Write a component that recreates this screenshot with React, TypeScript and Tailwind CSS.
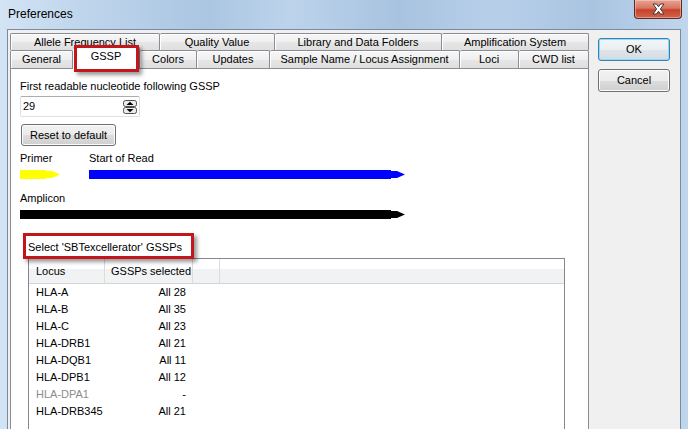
import React from "react";

const tabRow1 = [
  { label: "Allele Frequency List", cls: "w-[150px] border-l" },
  { label: "Quality Value", cls: "w-[115px]" },
  { label: "Library and Data Folders", cls: "w-[167px]" },
  { label: "Amplification System", cls: "w-[147px]" },
];

const tabRow2 = [
  { label: "General", cls: "w-[63px] border-l", selected: false },
  { label: "GSSP", cls: "w-[67px]", selected: true },
  { label: "Colors", cls: "w-[57px]", selected: false },
  { label: "Updates", cls: "w-[73px]", selected: false },
  { label: "Sample Name / Locus Assignment", cls: "w-[190px]", selected: false },
  { label: "Loci", cls: "w-[59px]", selected: false },
  { label: "CWD list", cls: "w-[70px]", selected: false },
];

const rows: { locus: string; sel: string; disabled?: boolean }[] = [
  { locus: "HLA-A", sel: "All 28" },
  { locus: "HLA-B", sel: "All 35" },
  { locus: "HLA-C", sel: "All 23" },
  { locus: "HLA-DRB1", sel: "All 21" },
  { locus: "HLA-DQB1", sel: "All 11" },
  { locus: "HLA-DPB1", sel: "All 12" },
  { locus: "HLA-DPA1", sel: "-", disabled: true },
  { locus: "HLA-DRB345", sel: "All 21" },
];

function Arrow({ w, color }: { w: number; color: string }) {
  const b = w - 14;
  const s = w - 8;
  return (
    <svg width={w} height={10} viewBox={`0 0 ${w} 10`} className="block">
      <path d={`M0 0H${b}V1H${s}L${w} 4.5L${s} 8H${b}V9H0Z`} fill={color} />
    </svg>
  );
}

const tabBase =
  "flex justify-center border-t border-r border-[#898c95] rounded-t-[2px] leading-[13px] whitespace-nowrap overflow-hidden";
const tabInactive =
  "bg-[linear-gradient(to_bottom,#f7f7f7_0%,#efefef_50%,#e6e6e6_51%,#dfdfdf_100%)] shadow-[inset_1px_1px_0_#ffffff]";

export default function App() {
  return (
    <div className="relative w-[688px] h-[429px] overflow-hidden font-['Liberation_Sans',Arial,sans-serif] text-[11px] text-black bg-[linear-gradient(to_right,#d3e4f5_0%,#bfd5ec_12%,#abc6e2_30%,#bcd3eb_42%,#a8c3e0_58%,#b8cfe9_72%,#a9c4e1_86%,#c0d6ed_100%)]">
      {/* Title bar */}
      <div className="h-[29px] flex items-start justify-between">
        <div className="pl-[8px] pt-[7px] text-[12px] leading-[15px] text-black">Preferences</div>
        <div className="mr-[6px] w-[48px] h-[19px] rounded-b-[4px] border border-t-0 border-[#5b2b26] bg-[linear-gradient(to_bottom,#e7a493_0%,#d8765f_45%,#c6412b_55%,#d3644b_100%)] shadow-[inset_0_0_0_1px_rgba(255,220,210,0.45)] flex items-center justify-center">
          <svg width="15" height="12" viewBox="0 0 15 12">
            <path
              d="M2 1H5.5L7.5 3.8L9.5 1H13L9.4 6L13 11H9.5L7.5 8.2L5.5 11H2L5.6 6Z"
              fill="#ffffff"
              stroke="#3a3a3a"
              strokeWidth="1"
              strokeLinejoin="round"
            />
          </svg>
        </div>
      </div>

      {/* Client area */}
      <div className="mx-[7px] h-[400px] border-l border-t border-r border-[#7c8a9b] bg-[#f0f0f0] flex gap-[9px] pl-[2px] pt-[3px]">
        {/* Tab control */}
        <div className="w-[579px] flex flex-col">
          <div className="flex h-[17px] shrink-0">
            {tabRow1.map((t) => (
              <div key={t.label} className={`${tabBase} ${tabInactive} ${t.cls} items-start pt-[2px]`}>
                {t.label}
              </div>
            ))}
          </div>
          <div className="flex h-[18px] items-end shrink-0">
            {tabRow2.map((t) =>
              t.selected ? (
                <div
                  key={t.label}
                  className={`${tabBase} ${t.cls} relative top-[1px] z-10 h-[22px] bg-white items-start pt-[2px]`}
                >
                  {t.label}
                </div>
              ) : (
                <div key={t.label} className={`${tabBase} ${tabInactive} ${t.cls} h-[18px] items-start pt-[2px]`}>
                  {t.label}
                </div>
              )
            )}
          </div>

          {/* Panel */}
          <div className="flex-1 min-h-0 bg-white border border-b-0 border-[#898c95] flex flex-col pl-[9px] overflow-hidden">
            <div className="shrink-0 mt-[11px] h-[13px] leading-[13px]">First readable nucleotide following GSSP</div>
            <div className="shrink-0 mt-[3px] w-[120px] h-[21px] border border-[#dbdfe6] border-t-[#abadb3] rounded-[2px] flex items-center justify-between pl-[2px] pr-[2px]">
              <span className="leading-[13px]">29</span>
              <svg width="14" height="14" viewBox="0 0 14 14" className="block">
                <rect x="0.5" y="0.5" width="13" height="6" rx="2" fill="#ececec" stroke="#4f4f4f" />
                <rect x="0.5" y="7.5" width="13" height="6" rx="2" fill="#ececec" stroke="#4f4f4f" />
                <path d="M3.5 5L7 1.8L10.5 5Z" fill="#000" />
                <path d="M3.5 9L7 12.2L10.5 9Z" fill="#000" />
              </svg>
            </div>
            <div className="shrink-0 mt-[7px] ml-[1px] w-[95px] h-[22px] rounded-[3px] border border-[#707070] shadow-[inset_0_0_0_1px_#fcfcfc] bg-[linear-gradient(to_bottom,#f2f2f2_0%,#ebebeb_50%,#dddddd_51%,#cfcfcf_100%)] flex items-center justify-center leading-[13px]">
              Reset to default
            </div>
            <div className="shrink-0 mt-[6px] h-[13px] leading-[13px] flex">
              <span className="w-[69px]">Primer</span>
              <span>Start of Read</span>
            </div>
            <div className="shrink-0 mt-[5px] flex">
              <div className="w-[69px]">
                <Arrow w={40} color="#ffff00" />
              </div>
              <Arrow w={316} color="#0000ff" />
            </div>
            <div className="shrink-0 mt-[12px] h-[13px] leading-[13px]">Amplicon</div>
            <div className="shrink-0 mt-[5px]">
              <Arrow w={385} color="#000000" />
            </div>
            <div className="shrink-0 mt-[21px] ml-[8px] h-[13px] leading-[13px]">Select 'SBTexcellerator' GSSPs</div>
            <div className="shrink-0 mt-[4px] ml-[8px] w-[537px] h-[190px] border border-[#828790] bg-white flex flex-col">
              <div className="shrink-0 h-[25px] flex border-b border-[#d5d5d5] bg-[linear-gradient(to_bottom,#ffffff_0%,#ffffff_40%,#f1f2f4_41%,#f1f2f4_100%)]">
                <div className="w-[76px] pl-[7px] flex items-center border-r border-[#dcdcdc] leading-[13px]">Locus</div>
                <div className="w-[88px] pl-[6px] flex items-center border-r border-[#dcdcdc] leading-[13px]">
                  GSSPs selected
                </div>
                <div className="w-[27px] border-r border-[#dcdcdc]" />
                <div className="flex-1" />
              </div>
              {rows.map((r) => (
                <div key={r.locus} className={`shrink-0 h-[17px] flex items-center leading-[13px] ${r.disabled ? "text-[#8c8c8c]" : ""}`}>
                  <div className="w-[76px] pl-[7px]">{r.locus}</div>
                  <div className={`w-[88px] pr-[7px] text-right ${r.disabled ? "text-black" : ""}`}>{r.sel}</div>
                </div>
              ))}
            </div>
          </div>
        </div>

        {/* Buttons */}
        <div className="w-[72px] flex flex-col gap-[8px] mt-[5px]">
          <div className="h-[23px] rounded-[3px] border border-[#3c7fb1] shadow-[inset_0_0_0_1px_#8fdcfa] bg-[linear-gradient(to_bottom,#f2f6f8_0%,#eaeff2_50%,#dfe5e9_51%,#d5dce1_100%)] flex items-center justify-center leading-[13px]">
            OK
          </div>
          <div className="h-[23px] rounded-[3px] border border-[#707070] shadow-[inset_0_0_0_1px_#fcfcfc] bg-[linear-gradient(to_bottom,#f2f2f2_0%,#ebebeb_50%,#dddddd_51%,#cfcfcf_100%)] flex items-center justify-center leading-[13px]">
            Cancel
          </div>
        </div>
      </div>

      {/* Red annotation boxes */}
      <div className="absolute left-[74px] top-[45px] w-[65px] h-[27px] border-[3px] border-[#c3161c] shadow-[3px_3px_4px_rgba(0,0,0,0.4)] z-20" />
      <div className="absolute left-[23px] top-[233px] w-[171px] h-[26px] border-[3px] border-[#c3161c] shadow-[3px_3px_4px_rgba(0,0,0,0.4)] z-20" />
    </div>
  );
}
